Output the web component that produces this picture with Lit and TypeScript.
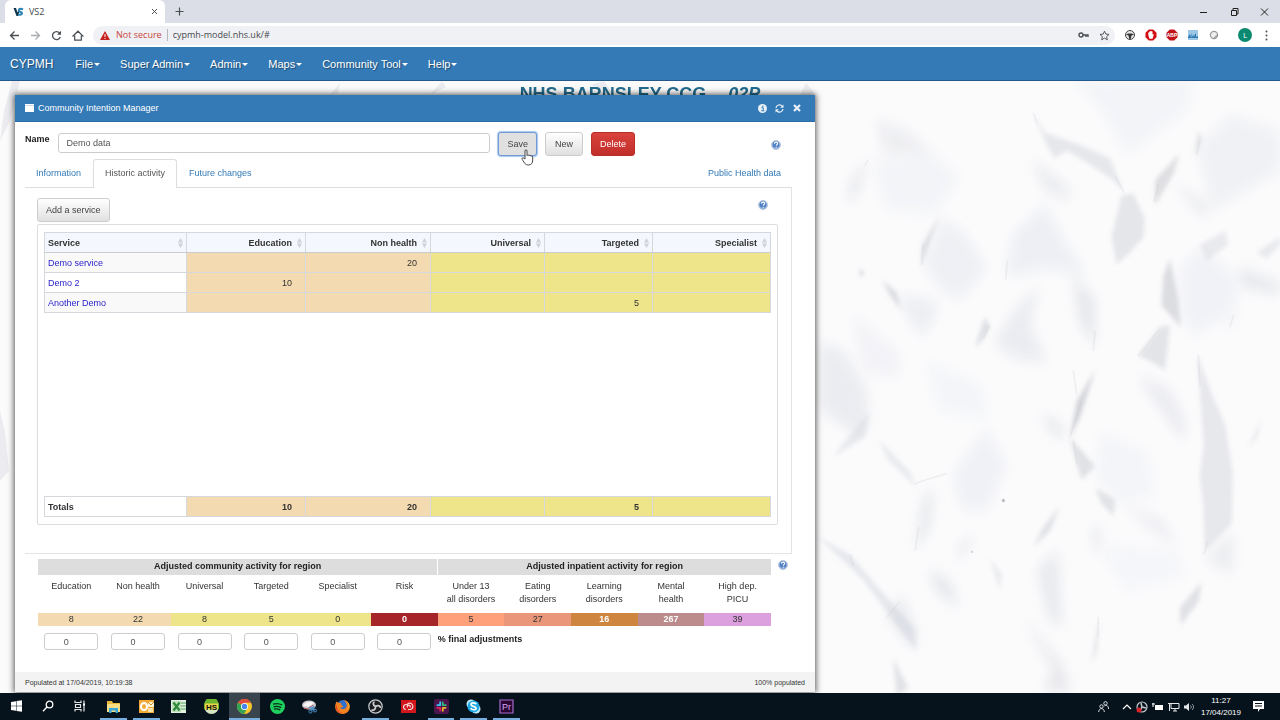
import { LitElement, html, css, svg } from "lit";
import { customElement } from "lit/decorators.js";
import { classMap } from "lit/directives/class-map.js";

const helpIcon = html`<svg class="help" viewBox="0 0 20 20" width="10" height="10" aria-hidden="true">
  <circle cx="10" cy="10" r="9" fill="#8fb0dc" stroke="#b9c6da" stroke-width="2"></circle>
  <circle cx="10" cy="9" r="6.5" fill="#4f7fc4"></circle>
  <path d="M6.8 7.4c.2-4.4 6.8-4 6.4-.2-.2 2-2.7 2-2.7 4.2M10.4 13.4v2" fill="none" stroke="#fff" stroke-width="2.2"></path>
</svg>`;

/* Crumpled-paper shading: [path, fill, opacity]. Creases keep a crisper edge than washes. */
const creases: [string, string, number][] = [
  ["M700 85L735 135L840 165L930 200L970 285L940 255L860 210L800 180L765 200L740 165Z", "#c9cbd2", 0.4],
  ["M965 295L1000 290L1035 355L1030 400L990 440L950 470L935 400Z", "#c6c8cf", 0.42],
  ["M1065 255L1138 188L1120 240L1065 320Z", "#b9bbc2", 0.42],
  ["M1185 195L1195 130L1205 150Z", "#b5b7be", 0.4],
  ["M420 345L385 420L365 472L368 420Z", "#b9bbc4", 0.5],
  ["M1110 455L1135 560L1142 630L1085 575L1090 500Z", "#b5b7be", 0.45],
  ["M1200 420L1275 385L1285 420L1220 460Z", "#c9cbd2", 0.35],
  ["M1015 703L1080 630L1110 625L1095 740L1060 720Z", "#c6c8cf", 0.45],
  ["M1192 700L1235 800L1275 880L1298 1000L1295 1130L1215 1200L1210 1080L1200 1010L1212 930Z", "#caccd4", 0.42],
  ["M885 740L840 860L810 912L830 820Z", "#aeb0b8", 0.5],
  ["M810 912L850 950L885 985L845 1020L828 970Z", "#bcbec6", 0.42],
  ["M885 1040L945 1070L940 1112L905 1080Z", "#bcbec6", 0.4],
  ["M245 510L290 540L303 585L270 550Z", "#b9bbc4", 0.45],
  ["M180 480L190 490L183 505Z", "#8f9199", 0.5],
  ["M555 605L570 630L545 665L525 682Z", "#b9bbc4", 0.45],
  ["M205 850L195 910L100 960L150 905Z", "#cccfd8", 0.4],
  ["M235 915L330 1000L350 1040L265 970Z", "#cfd1d9", 0.4],
  ["M55 1165L150 1210L230 1290L345 1400L348 1455L190 1275Z", "#c9ccd6", 0.4],
  ["M780 1085L750 1150L700 1190L730 1140Z", "#c2c4cc", 0.45],
  ["M280 1475L325 1550L290 1568Z", "#c3c5cd", 0.45],
  ["M1140 1345L1205 1280L1195 1330L1142 1390Z", "#bfc1c9", 0.45],
  ["M897 1370L890 1450L875 1490Z", "#bbbdc5", 0.5],
  ["M570 1220L605 1260L600 1300Z", "#c7c9d1", 0.35],
  ["M1388 860L1370 910L1345 940Z", "#b9bbc3", 0.4],
  ["M1370 440L1440 400L1440 420L1400 455Z", "#c7c9d1", 0.35],
];
const washes: [string, string, number][] = [
  ["M370 470L430 350L500 400L560 480L480 560L420 530Z", "#e3e6ee", 0.5],
  ["M620 500L640 390L735 320L800 420L860 500L740 480Z", "#e2e5ec", 0.55],
  ["M1140 480L1200 430L1310 500L1300 590L1180 650L1150 600Z", "#e8eaf1", 0.5],
  ["M300 545L420 570L370 655L320 600Z", "#dee1e9", 0.5],
  ["M580 670L650 580L718 528L690 620L740 720L650 710Z", "#dee0e8", 0.55],
  ["M820 500L885 560L885 680L840 620Z", "#d2d4dc", 0.5],
  ["M60 670L130 690L200 790L205 880L170 905L60 840Z", "#dbdee6", 0.5],
  ["M260 1370L305 1310L350 1410L345 1455Z", "#dadce4", 0.5],
  ["M385 1250L450 1280L475 1345L410 1300Z", "#ced1d9", 0.55],
  ["M710 1245L775 1200L785 1400L745 1370Z", "#d8dae2", 0.5],
  ["M665 1370L780 1480L815 1560L730 1560L760 1500Z", "#d3d5dc", 0.5],
  ["M1320 480L1440 520L1440 545L1325 525Z", "#d0d2db", 0.5],
  ["M225 100L320 130L400 190L255 190Z", "#dfe1e8", 0.5],
  ["M200 200L180 280L140 320L150 260Z", "#d6d8df", 0.5],
  ["M220 210L400 190L480 250L400 340L260 330Z", "#eff0f5", 0.6],
  ["M690 200L800 270L815 305L740 285Z", "#d9dbe2", 0.5],
  ["M820 0L1180 0L1160 80L980 190L900 70Z", "#eff0f5", 0.6],
  ["M1190 170L1290 90L1440 130L1440 230L1240 330Z", "#e7e9ef", 0.55],
  ["M1120 260L1240 330L1200 340Z", "#d2d4dc", 0.5],
  ["M460 1000L560 890L620 980L560 1100L480 1090Z", "#e7eaf1", 0.55],
  ["M345 1200L370 1070L400 1035L390 1140Z", "#d2d5dc", 0.5],
  ["M530 1160L470 1230L480 1180Z", "#d8dae3", 0.5],
  ["M720 850L780 880L800 910L760 900Z", "#c8cbd4", 0.5],
  ["M1010 750L1110 790L1160 880L1150 920L1090 850Z", "#dddfe7", 0.55],
  ["M970 1090L1080 1120L1140 1190L1050 1140Z", "#dddfe7", 0.55],
  ["M900 900L1040 950L1065 1060L960 1080L890 1010Z", "#f1f2f7", 0.7],
  ["M880 1130L905 1160L885 1220Z", "#d0d2da", 0.5],
  ["M900 1190L1120 1200L1160 1260L980 1300Z", "#f2f3f8", 0.7],
  ["M160 600L300 700L290 760L190 740Z", "#ecedf4", 0.6],
  ["M380 720L540 780L560 860L420 840Z", "#f0f2f7", 0.7],
  ["M1330 560L1300 620L1270 650Z", "#d8dae2", 0.5],
  ["M1210 1220L1300 1150L1300 1260Z", "#e2e4ea", 0.6],
];

@customElement("paper-backdrop")
export class PaperBackdrop extends LitElement {
  static styles = css`
    :host { display: block; background: #fbfbfc; }
    svg { display: block; width: 100%; height: 100%; }
  `;
  render() {
    return html`<svg viewBox="0 0 1280 612" preserveAspectRatio="xMaxYMin slice" aria-hidden="true">
      <defs>
        <filter id="wash" x="-20%" y="-20%" width="140%" height="140%"><feGaussianBlur stdDeviation="18"></feGaussianBlur></filter>
        <filter id="crease" x="-20%" y="-20%" width="140%" height="140%"><feGaussianBlur stdDeviation="6"></feGaussianBlur></filter>
      </defs>
      <g transform="translate(800 -1) scale(.3333 .3922)">
        <g filter="url(#wash)">${washes.map(([d, f, o]) => svg`<path d=${d} fill=${f} opacity=${o}></path>`)}</g>
        <g filter="url(#crease)">${creases.map(([d, f, o]) => svg`<path d=${d} fill=${f} opacity=${o}></path>`)}</g>
        <g fill="none" stroke="#bfc1c8" stroke-width="2" opacity=".5">
          <path d="M365 472L370 420M700 85L712 112M945 245L972 286M1063 310L1075 265M810 910L845 820M820 920L832 980M617 510L622 460M880 690L885 640M345 1030L360 1024L440 1003M550 660L568 625M1195 700L1200 780M345 1200L356 1140M895 1370L893 1420M1212 1210L1222 1180M150 1210L160 1240M260 1370L300 1330M1015 703L1078 635M1290 630L1300 600M195 220L204 203M1190 190L1200 155M820 740L830 800"></path>
        </g>
        <circle cx="610" cy="1072" r="4" fill="#a9abb2"></circle>
        <circle cx="516" cy="1203" r="2.5" fill="#b5b7be"></circle>
      </g>
      <g fill="#e2e3e8" opacity=".6">
        <path d="M12 0L20 0L10 40L0 60L4 30Z"></path><path d="M0 330L5 350L9 390L0 400Z"></path>
        <path d="M330 14L340 2L338 12Z"></path><path d="M430 14L442 0L446 6Z"></path>
        <path d="M590 4L604 0L612 12Z"></path><path d="M800 14L806 2L816 14Z"></path>
      </g>
    </svg>`;
  }
}

@customElement("browser-chrome")
export class BrowserChrome extends LitElement {
  static styles = css`
    :host { display: block; font: 9px/12px "Open Sans", sans-serif; color: #45494d; }
    button { border: 0; padding: 0; margin: 0; background: none; display: grid; place-items: center; }
    svg { display: block; }
    .strip { display: flex; align-items: center; height: 23px; background: #dbdee6; padding-left: 5px; }
    .tab { display: flex; align-items: center; gap: 5px; align-self: flex-end; width: 160px; height: 23px; box-sizing: border-box; padding: 0 7px 0 8px; background: #fff; border-radius: 6px 6px 0 0; }
    .tab span { flex: 1; }
    .add { margin-left: 10px; }
    .wins { margin-left: auto; display: flex; gap: 18px; padding-right: 10px; }
    .bar { display: flex; align-items: center; height: 24px; background: #fff; padding: 0 9px; }
    .nav { display: flex; gap: 10px; margin-right: 9px; }
    .omni { flex: 1; display: flex; align-items: center; height: 19px; border-radius: 10px; background: #f0f1f4; padding: 0 5px 0 7px; }
    .warn { color: #c8453c; margin: 0 5px 0 6px; }
    .sep { width: 1px; height: 12px; background: #b5b8bc; }
    input { flex: 1; border: 0; padding: 0 5px; background: none; font: inherit; color: inherit; outline: 0; }
    .omni button + button { margin-left: 10px; }
    .ext { display: flex; align-items: center; gap: 9px; margin-left: 9px; }
    .me { width: 14px; height: 14px; border-radius: 50%; background: #0b8a72; color: #fff; margin-left: 9px; font: 8px/14px "Open Sans", sans-serif; }
    .ext .more { width: 10px; height: 12px; }
  `;
  render() {
    const s = "#4b4f54";
    return html`
      <div class="strip">
        <div class="tab">
          <svg width="11" height="10" viewBox="0 0 22 20"><path d="M1 2h5l3 9 3-9h3l-5 16H7z" fill="#123449"></path><path d="M20 5c-8-4-11 3-5 5s2 7-5 5" fill="none" stroke="#2b86b8" stroke-width="4"></path></svg>
          <span>VS2</span>
          <button aria-label="Close tab"><svg width="7" height="7" viewBox="0 0 7 7"><path d="M1 1l5 5M6 1l-5 5" stroke=${s}></path></svg></button>
        </div>
        <button class="add" aria-label="New tab"><svg width="9" height="9" viewBox="0 0 9 9"><path d="M4.500 0.500v8M.5 4.500h8" stroke=${s} stroke-width="1.200"></path></svg></button>
        <div class="wins">
          <button aria-label="Minimise"><svg width="12" height="10" viewBox="0 0 12 10"><path d="M2 5.500h7" stroke="#222"></path></svg></button>
          <button aria-label="Restore"><svg width="12" height="10" viewBox="0 0 12 10"><path d="M3.500 3.500h5v5h-5zM5 3V1.500h5V7H9" fill="none" stroke="#222"></path></svg></button>
          <button aria-label="Close"><svg width="12" height="10" viewBox="0 0 12 10"><path d="M3 1.500l7 7M10 1.500l-7 7" stroke="#222"></path></svg></button>
        </div>
      </div>
      <div class="bar">
        <div class="nav">
          <button aria-label="Back"><svg width="11" height="11" viewBox="0 0 11 11"><path d="M10 5.500H1.500M5.500 1.500l-4 4 4 4" fill="none" stroke=${s} stroke-width="1.300"></path></svg></button>
          <button aria-label="Forward"><svg width="11" height="11" viewBox="0 0 11 11"><path d="M1 5.500h8.500M5.500 1.500l4 4-4 4" fill="none" stroke="#a9acb0" stroke-width="1.300"></path></svg></button>
          <button aria-label="Reload"><svg width="11" height="11" viewBox="0 0 11 11"><path d="M9.300 7A4 4 0 1 1 8.600 3" fill="none" stroke=${s} stroke-width="1.300"></path><path d="M10 .8v4H6z" fill=${s}></path></svg></button>
          <button aria-label="Home"><svg width="12" height="11" viewBox="0 0 12 11"><path d="M1 6l5-4.800L11 6H9.300v4.200H2.700V6z" fill="none" stroke=${s} stroke-width="1.200"></path></svg></button>
        </div>
        <div class="omni">
          <svg width="10" height="9" viewBox="0 0 10 9"><path d="M5 0l5 9H0z" fill="#c5221f"></path><path d="M5 3v3M5 7v1" stroke="#fff"></path></svg>
          <span class="warn">Not secure</span><span class="sep"></span>
          <input aria-label="Address" value="cypmh-model.nhs.uk/#">
          <button aria-label="Saved password"><svg width="11" height="8" viewBox="0 0 11 8"><circle cx="3" cy="4" r="2" fill="none" stroke=${s} stroke-width="1.400"></circle><path d="M5 4h5v2M8 4v2" fill="none" stroke=${s} stroke-width="1.400"></path></svg></button>
          <button aria-label="Bookmark"><svg width="11" height="11" viewBox="0 0 24 24"><path d="M12 2.500l2.900 6.500 7 .7-5.300 4.700 1.600 7-6.200-3.700-6.200 3.700 1.600-7L2.100 9.700l7-.7z" fill="none" stroke=${s} stroke-width="2"></path></svg></button>
        </div>
        <div class="ext">
          <button aria-label="Steering"><svg width="12" height="12" viewBox="0 0 12 12"><circle cx="6" cy="6" r="4.500" fill="#e4e4e4" stroke="#444" stroke-width="1"></circle><path d="M2 5.400c2-1.300 6-1.300 8 0L7.500 6.500 6.700 10H5.300l-.8-3.500z" fill="#333"></path></svg></button>
          <button aria-label="Ad blocker"><svg width="12" height="12" viewBox="0 0 12 12"><path d="M3.800.5h4.400l3.300 3.300v4.400l-3.300 3.300H3.800L.5 8.200V3.800z" fill="#d40d12"></path><path d="M3.300 6V3.500h1V2.600h1v-.6h1.200v.6h1v3l1-.8v1.700L7.500 9.700H4.500z" fill="#fff"></path></svg></button>
          <button aria-label="ABP"><svg width="12" height="12" viewBox="0 0 12 12"><path d="M3.800.5h4.400l3.300 3.300v4.400l-3.300 3.300H3.800L.5 8.200V3.800z" fill="#c1121a"></path><text x="6" y="8" font-size="5" font-weight="bold" fill="#fff" text-anchor="middle" font-family="Liberation Sans">ABP</text></svg></button>
          <button aria-label="Image tool"><svg width="12" height="12" viewBox="0 0 12 12"><path d="M1 1h10v10H1z" fill="#9cc8e6"></path><path d="M1 8l2-3v3l1.500-4v5l2-4v3l2.500-4v4l2-1v2H1z" fill="#2f7ab0"></path></svg></button>
          <button aria-label="Ring"><svg width="12" height="12" viewBox="0 0 12 12"><circle cx="6" cy="6" r="3.600" fill="#eee" stroke="#999" stroke-width="1.200"></circle><path d="M6 8.500A2.500 2.500 0 0 0 8.500 6" stroke="#888" fill="none"></path></svg></button>
          <button class="me" aria-label="Profile">L</button>
          <button class="more" aria-label="Menu"><svg width="3" height="11" viewBox="0 0 3 11" fill=${s}><circle cx="1.500" cy="1.500" r="1"></circle><circle cx="1.500" cy="5.500" r="1"></circle><circle cx="1.500" cy="9.500" r="1"></circle></svg></button>
        </div>
      </div>`;
  }
}

const columns = [
  { name: "Service", w: 142, cls: "svc" }, { name: "Education", w: 119, cls: "tan" }, { name: "Non health", w: 125, cls: "tan" },
  { name: "Universal", w: 114, cls: "khaki" }, { name: "Targeted", w: 108, cls: "khaki" }, { name: "Specialist", w: 118, cls: "khaki" },
];
const rows = [
  ["Demo service", "", "20", "", "", ""],
  ["Demo 2", "10", "", "", "", ""],
  ["Another Demo", "", "", "", "5", ""],
];
const totals = ["Totals", "10", "20", "", "5", ""];
const region = [
  ["Education", "8", "tan"], ["Non health", "22", "tan"], ["Universal", "8", "khaki"], ["Targeted", "5", "khaki"],
  ["Specialist", "0", "khaki"], ["Risk", "0", "risk"], ["Under 13\nall disorders", "5", "salmon"], ["Eating\ndisorders", "27", "dark-salmon"],
  ["Learning\ndisorders", "16", "peru"], ["Mental\nhealth", "267", "rosy"], ["High dep.\nPICU", "39", "plum"],
];

@customElement("intention-manager")
export class IntentionManager extends LitElement {
  static styles = css`
    :host { display: flex; flex-direction: column; background: #fff; color: #333; font: 9px/12px "Liberation Sans", Arial, sans-serif; box-shadow: 0 0 6px 1px rgba(0, 0, 0, .65); }
    svg { display: block; }
    header { display: flex; align-items: center; gap: 4px; height: 27px; box-sizing: border-box; padding: 0 12px 0 10px; background: #337ab7; border-bottom: 1px solid #2a6ca6; color: #fff; }
    header h2 { flex: 1; margin: 0; font: inherit; }
    header button { border: 0; background: none; padding: 0; width: 13px; display: grid; place-items: center; }
    .body { flex: 1; padding: 10px 10px 0; }
    .form { display: flex; align-items: flex-start; gap: 8px; }
    .form label { font-weight: bold; color: #222; line-height: 15px; }
    .form input { flex: 1; min-width: 0; height: 20px; margin-top: 1px; box-sizing: border-box; border: 1px solid #ccc; border-radius: 3px; padding: 0 8px; font: inherit; color: #555; }
    .btn { height: 24px; padding: 0 8px; border: 1px solid #ccc; border-radius: 3px; background: linear-gradient(#fff, #e0e0e0); color: #444; font: inherit; }
    .new { padding: 0 9px; }
    .save { background: #e0e0e0; border-color: #6f9bd8; box-shadow: 0 0 1px 1px #a9c6ee; }
    .delete { background: linear-gradient(#d9423d, #c12e2a); border-color: #b92c28; color: #fff; }
    .aside { width: 162px; padding: 8px 24px 0 0; box-sizing: border-box; display: flex; justify-content: flex-end; }
    .tabs { display: flex; gap: 1px; margin: 3px 13px 0 0; border-bottom: 1px solid #ddd; }
    .tabs a { padding: 0 10px; line-height: 26px; height: 28px; border: 1px solid transparent; border-bottom: 0; color: #337ab7; text-decoration: none; box-sizing: border-box; }
    .tabs .on { padding: 0 11px; color: #555; background: #fff; border-color: #ddd; border-radius: 3px 3px 0 0; height: 29px; margin-bottom: -1px; }
    .tabs .end { margin-left: auto; }
    .panel { margin-right: 13px; border: 1px solid #e4e4e4; border-width: 0 1px 1px 0; padding: 10px 13px 28px 12px; }
    .tools { display: flex; justify-content: space-between; padding: 0 10px 2px 0; }
    .tools .help { margin-top: 2px; }
    .box { border: 1px solid #ddd; border-radius: 2px; padding: 7px 6px; }
    table { border-collapse: collapse; table-layout: fixed; width: 100%; }
    .grid { min-height: 264px; }
    .data th, .data td { border: 1px solid #d5d8dc; height: 20px; box-sizing: border-box; padding: 0 13px 0 3px; text-align: right; color: #333; }
    .data thead th { background: #f4f7fd; border-bottom-color: #c9ccd0; }
    .data .first { text-align: left; }
    .data tbody tr:nth-child(odd) .first { background: #f9f9f9; }
    .data a { color: #2a22c8; text-decoration: none; }
    .data .sum { font-weight: bold; }
    .head { display: flex; justify-content: flex-end; align-items: center; gap: 5px; margin-right: -10px; }
    .first .head { justify-content: space-between; }
    .tan { background: #f3dab1; }
    .khaki { background: #eee58a; }
    .risk { background: #a52529; }
    .salmon { background: #ffa07a; }
    .dark-salmon { background: #e9967a; }
    .peru { background: #cd853f; }
    .rosy { background: #bc8b8b; }
    .plum { background: #dba0dd; }
    .region .risk, .region .peru, .region .rosy { color: #fff; font-weight: bold; }
    .region { display: flex; align-items: flex-start; gap: 7px; margin: 5px 17px 0 13px; }
    .sums { flex: 1; }
    .region table { text-align: center; }
    .region th, .region td { padding: 0; }
    .region .group th { background: #ddd; height: 16px; color: #222; line-height: 14px; vertical-align: top; }
    .region .group th + th { border-left: 1px solid #fff; }
    .region .names th { font-weight: normal; height: 38px; padding-top: 5px; box-sizing: border-box; line-height: 13px; vertical-align: top; white-space: pre-line; }
    .region .vals td { height: 13px; line-height: 13px; }
    .region .adj td { padding-top: 7px; vertical-align: top; }
    .adj input { width: 54px; height: 17px; box-sizing: border-box; border: 1px solid #ccc; border-radius: 3px; padding: 0 10px 0 0; text-align: center; font: inherit; color: #555; display: block; margin: 0 auto; }
    .region .adj .note { text-align: left; font-weight: bold; color: #222; }
    .region .help { margin-top: 1px; }
    footer { display: flex; justify-content: space-between; align-items: center; height: 20px; padding: 2px 10px 0; box-sizing: border-box; background: #f3f3f3; font-size: 7px; color: #333; }
  `;
  render() {
    const sort = html`<svg width="5" height="10" viewBox="0 0 5 10" fill="#cfd2d8" aria-hidden="true"><path d="M2.500 0L5 4.500H0zM0 5.500h5L2.500 10z"></path></svg>`;
    const cols = html`<colgroup>${columns.map((c) => html`<col style="width:${(c.w / 726) * 100}%">`)}</colgroup>`;
    return html`
      <header>
        <svg width="9" height="8" viewBox="0 0 9 8"><path d="M0 0h9v8H0z" fill="#fff"></path><path d="M0 1.500h9" stroke="#9fc0e0" stroke-width=".6"></path></svg>
        <h2>Community Intention Manager</h2>
        <button aria-label="Info"><svg width="9" height="9" viewBox="0 0 18 18"><circle cx="9" cy="9" r="9" fill="#e9eff6"></circle><path d="M7 7.500h3.500V13M6.500 13.500h6M8 4.500h3" fill="none" stroke="#337ab7" stroke-width="2"></path></svg></button>
        <button aria-label="Refresh"><svg width="9" height="9" viewBox="0 0 18 18"><path d="M2 8a7 7 0 0 1 12.500-3.500M16 10A7 7 0 0 1 3.500 13.500" fill="none" stroke="#e9eff6" stroke-width="2.500"></path><path d="M17 1v6.500h-6.500zM1 17v-6.500h6.500z" fill="#e9eff6"></path></svg></button>
        <button aria-label="Close"><svg width="8" height="8" viewBox="0 0 8 8"><path d="M1 1l6 6M7 1L1 7" stroke="#e9eff6" stroke-width="2.200"></path></svg></button>
      </header>
      <div class="body">
        <div class="form">
          <label for="name">Name</label><input id="name" value="Demo data">
          <button class="btn save">Save</button><button class="btn new">New</button><button class="btn delete">Delete</button>
          <span class="aside">${helpIcon}</span>
        </div>
        <nav class="tabs">
          <a href="#">Information</a><a href="#" class="on">Historic activity</a><a href="#">Future changes</a><a href="#" class="end">Public Health data</a>
        </nav>
        <section class="panel">
          <div class="tools"><button class="btn">Add a service</button>${helpIcon}</div>
          <div class="box">
            <div class="grid"><table class="data">${cols}
              <thead><tr>${columns.map((c, i) => html`<th class=${classMap({ first: i === 0 })}><span class="head">${c.name}${sort}</span></th>`)}</tr></thead>
              <tbody>${rows.map((r) => html`<tr>${r.map((v, i) => i === 0 ? html`<td class="first"><a href="#">${v}</a></td>` : html`<td class=${columns[i].cls}>${v}</td>`)}</tr>`)}</tbody>
            </table></div>
            <table class="data">${cols}<tfoot><tr>${totals.map((v, i) => html`<td class="sum ${i === 0 ? "first" : columns[i].cls}">${v}</td>`)}</tr></tfoot></table>
          </div>
        </section>
        <div class="region">
          <div class="sums"><table>
            <colgroup>${region.map(() => html`<col>`)}</colgroup>
            <thead>
              <tr class="group"><th colspan="6">Adjusted community activity for region</th><th colspan="5">Adjusted inpatient activity for region</th></tr>
              <tr class="names">${region.map(([n]) => html`<th>${n}</th>`)}</tr>
            </thead>
            <tbody>
              <tr class="vals">${region.map(([, v, c]) => html`<td class=${c}>${v}</td>`)}</tr>
              <tr class="adj">${region.slice(0, 6).map(([n]) => html`<td><input aria-label="${n} adjustment" value="0"></td>`)}<td class="note" colspan="5">% final adjustments</td></tr>
            </tbody>
          </table></div>
          ${helpIcon}
        </div>
      </div>
      <footer><span>Populated at 17/04/2019, 10:19:38</span><span>100% populated</span></footer>`;
  }
}

const apps = [
  { n: "File Explorer", run: true, g: svg`<path d="M1 2h5l1 2h7v9H1z" fill="#e9b93c"></path><path d="M1 5h13v8H1z" fill="#f8dd84"></path><path d="M3 14V9h9v5h-2.500v-2.500h-4V14z" fill="#35a5d8"></path>` },
  { n: "Outlook", run: true, g: svg`<path d="M0 1h15v13H0z" fill="#f4a935"></path><path d="M9 3h6v5H9z" fill="#fff3d8"></path><path d="M9 9h5v4H9z" fill="#fce3ae"></path><ellipse cx="5" cy="7.500" rx="3" ry="3.500" fill="none" stroke="#fff" stroke-width="2"></ellipse><path d="M9 3l3 3 3-3" fill="none" stroke="#d58a1c"></path>` },
  { n: "Excel", run: false, g: svg`<path d="M0 1h15v13H0z" fill="#e3f1e2"></path><path d="M1 2h9v11H1z" fill="#bfe0bd"></path><path d="M2.500 3.500l6 8M8.500 3.500l-6 8" stroke="#2f8a3b" stroke-width="2.200"></path><path d="M10 4h5M10 7h5M10 10h5" stroke="#57a35c"></path>` },
  { n: "HeidiSQL", run: false, g: svg`<circle cx="7.500" cy="7.500" r="7.500" fill="#d7e7c0"></circle><path d="M0 6a7.500 7.500 0 0 1 15 0v4H0z" fill="#6cb52d"></path><path d="M1 4.500h13v6H1z" fill="#e9d44a"></path><text x="7.500" y="10.500" font-size="8" font-weight="bold" text-anchor="middle" fill="#111" font-family="Liberation Sans">HS</text>` },
  { n: "Chrome", run: true, on: true, g: svg`<circle cx="7.500" cy="7.500" r="7.500" fill="#f9c52d"></circle><path d="M7.500 7.500L1 3.700A7.500 7.500 0 0 1 14 3.800H7.500z" fill="#dd4b3c"></path><path d="M7.500 7.500L1 3.700A7.500 7.500 0 0 0 7 15l3.500-6z" fill="#33a355"></path><circle cx="7.500" cy="7.500" r="3.500" fill="#fff"></circle><circle cx="7.500" cy="7.500" r="2.700" fill="#4684ee"></circle>` },
  { n: "Spotify", run: false, g: svg`<circle cx="7.500" cy="7.500" r="7.500" fill="#1ed15f"></circle><path d="M3 5.200c3-1 6.500-.7 9.200.8M3.500 7.800c2.500-.7 5.300-.4 7.700.8M4 10.200c2-.6 4.300-.3 6.200.7" fill="none" stroke="#0b2b17" stroke-width="1.300"></path>` },
  { n: "Snipping Tool", run: false, g: svg`<ellipse cx="7" cy="6" rx="7" ry="4.500" fill="#cfc6cc"></ellipse><path d="M1 7c2-5 8-5 11-3L7 8z" fill="#f7f4f5"></path><path d="M2 9c3 1.500 6 0 9-3" fill="none" stroke="#b5535a"></path><path d="M7 8l6 3M12 7l-3 5" stroke="#4f8fc4" stroke-width="1.500"></path><circle cx="8.500" cy="12.500" r="1.600" fill="none" stroke="#4f8fc4"></circle><circle cx="13" cy="11.500" r="1.500" fill="none" stroke="#4f8fc4"></circle>` },
  { n: "Firefox", run: false, g: svg`<circle cx="8" cy="7" r="6" fill="#2f6fd0"></circle><path d="M1.500 2.500C-3 12 5 16 9 14.700c5-1 7-6 5-10C12 1.500 10 1 8.500 1c3 2 3.500 4.500 3 6.500-1 3.500-5.500 3-6.500 1 2 .5 2.500-.5 3.500-1.500-2 0-3-2-2.500-3-2-.5-3.500 0-4.500-1.500z" fill="#f58220"></path><path d="M2 5c-1 5 2 9 7 9-6 1-10-4-7-9z" fill="#e5402b"></path><path d="M11 2c3 2 3.500 6 1.500 9 3-3 2.500-7-1.500-9z" fill="#ffd43b"></path>` },
  { n: "OBS", run: true, g: svg`<circle cx="7.500" cy="7.500" r="6.700" fill="#1b1c20" stroke="#c9cacc" stroke-width="1.200"></circle><path d="M7.500 7.500C4.500 6 5 3.500 6.500 2.700M7.500 7.500c3-2 5-.2 5 1.500M7.500 7.500c.3 3.500-2.300 4.200-4 3.200" fill="none" stroke="#c9cacc" stroke-width="1.800"></path>` },
  { n: "Creative Cloud", run: false, g: svg`<path d="M0 1h15v13H0z" fill="#d1161c"></path><path d="M5 10.500a2.500 2.500 0 1 1 1-4.800 3.200 3.200 0 1 1 3.500 4.800H7M6.500 8.500a1.500 1.500 0 1 1 2.500 0" fill="none" stroke="#f6dcdc" stroke-width="1.200"></path>` },
  { n: "Slack", run: true, g: svg`<rect width="15" height="15" rx="2" fill="#4a154b"></rect><g fill="none" stroke-width="1.800" stroke-linecap="round"><path d="M6.200 3.200v3M3.400 6.200h2.800" stroke="#36c5f0"></path><path d="M8.800 3.400v2.800M8.800 6.200h3" stroke="#2eb67d"></path><path d="M8.800 8.800v3M8.800 8.800h2.800" stroke="#ecb22e"></path><path d="M3.200 8.800h3M6.200 8.800v2.800" stroke="#e01e5a"></path></g>` },
  { n: "Skype", run: true, g: svg`<circle cx="5" cy="5" r="4.500" fill="#bfe9fa"></circle><circle cx="10" cy="10" r="4.500" fill="#bfe9fa"></circle><circle cx="7.500" cy="7.500" r="6" fill="#1fa9e4"></circle><path d="M10.300 5.200c-1.300-2-5.300-1.500-5.200.4.100 2.200 5 1.300 5 3.700 0 2-4.300 2-5.300-.3" fill="none" stroke="#fff" stroke-width="1.700"></path>` },
  { n: "Premiere Pro", run: true, g: svg`<path d="M1 1h13v13H1z" fill="#2a0634" stroke="#a76bc9" stroke-width="1.200"></path><text x="7.500" y="10.500" font-size="9" text-anchor="middle" fill="#dca6f4" font-family="Liberation Sans">Pr</text>` },
];

@customElement("task-bar")
export class TaskBar extends LitElement {
  static styles = css`
    :host { display: flex; align-items: stretch; height: 27px; background: #06121c; color: #fff; font: 8px/12px "Liberation Sans", Arial, sans-serif; }
    button { border: 0; background: none; padding: 0; display: grid; place-items: center; box-sizing: border-box; border-bottom: 2px solid transparent; }
    svg { display: block; }
    .sys { display: grid; grid-template-columns: repeat(3, 32px); }
    .apps { display: grid; grid-template-columns: repeat(13, 1fr); width: 426px; margin-left: 1px; }
    .apps button { margin: 0 3px 0 3px; padding-top: 1px; }
    .apps .run { border-bottom-color: #76aee0; }
    .apps .on { background: #3a444d; margin: 0 1px; }
    .tray { margin-left: auto; display: flex; align-items: center; gap: 4px; padding-right: 16px; }
    .people { margin-right: 9px; }
    .clock { text-align: center; margin: 0 8px 0 2px; }
    .clock div { line-height: 12px; }
  `;
  render() {
    return html`
      <div class="sys">
        <button aria-label="Start"><svg width="11" height="12" viewBox="0 0 11 12" fill="#fff"><path d="M0 2l5-.8v4.500H0zM5.500 1.100L11 .3v5.400H5.500zM0 6.300h5v4.500L0 10zM5.500 6.300H11v5.400l-5.500-.8z"></path></svg></button>
        <button aria-label="Search"><svg width="12" height="12" viewBox="0 0 12 12"><circle cx="7.500" cy="4.500" r="3.300" fill="none" stroke="#fff" stroke-width="1.300"></circle><path d="M5 7L1 11.200" stroke="#fff" stroke-width="1.300"></path></svg></button>
        <button aria-label="Task view"><svg width="12" height="12" viewBox="0 0 12 12"><path d="M1 .5v2h6v-2M1.500 4.500h5v3h-5zM1 11.500v-2h6v2M10 .5v11" fill="none" stroke="#e4e6e8" stroke-width="1.200"></path><path d="M9 3.500h2v2H9z" fill="#fff"></path></svg></button>
      </div>
      <div class="apps">${apps.map((a) => html`<button aria-label=${a.n} class=${classMap({ run: a.run, on: !!a.on })}><svg width="15" height="15" viewBox="0 0 15 15">${a.g}</svg></button>`)}</div>
      <div class="tray">
        <svg class="people" width="11" height="12" viewBox="0 0 11 12" fill="none" stroke="#dde0e3"><circle cx="3.500" cy="5.500" r="1.700"></circle><path d="M.7 11c0-4.500 5.600-4.500 5.600 0"></path><circle cx="7.500" cy="2.300" r="1.700"></circle><path d="M6.500 5c2-1.500 4-.2 4 3"></path></svg>
        <svg width="10" height="8" viewBox="0 0 10 8"><path d="M1 6l4-4 4 4" fill="none" stroke="#fff" stroke-width="1.200"></path></svg>
        <svg width="12" height="12" viewBox="0 0 12 12"><circle cx="6" cy="6" r="5" fill="none" stroke="#c9cacc" stroke-width="1.200"></circle><path d="M6 6L5 2M6 6l4 1M6 6l-2 4" stroke="#c9cacc" stroke-width="1.500"></path><circle cx="3" cy="9" r="2.500" fill="#d8232a"></circle></svg>
        <svg width="12" height="10" viewBox="0 0 12 10"><path d="M3 3h8v5H3z" fill="#fff"></path><path d="M0 2h3M1 1v4" stroke="#fff"></path></svg>
        <svg width="12" height="10" viewBox="0 0 12 10" fill="none" stroke="#e4e6e8"><path d="M3 1.500h8v5H3zM5 9h4M7 7v2M1.500 1v8M0 1.500h3"></path></svg>
        <svg width="11" height="10" viewBox="0 0 11 10"><path d="M0 3.500h2L5 1v8L2 6.500H0z" fill="#e4e6e8"></path><path d="M6.500 3.500c1 1 1 2 0 3M8 2c2 2 2 4 0 6" fill="none" stroke="#a5abb0"></path></svg>
        <div class="clock"><div>11:27</div><div>17/04/2019</div></div>
        <svg width="11" height="11" viewBox="0 0 11 11"><path d="M0 0h11v8H7L5 11V8H0z" fill="#fff"></path><path d="M2 2.500h7M2 5h7" stroke="#06121c"></path></svg>
      </div>`;
  }
}

@customElement("app-root")
export class AppRoot extends LitElement {
  static styles = css`
    :host { display: flex; flex-direction: column; height: 100vh; overflow: hidden; font: 11px/14px "Liberation Sans", Arial, sans-serif; }
    .menu { display: flex; align-items: center; gap: 20px; height: 34px; box-sizing: border-box; padding-left: 10px; background: #337ab7; border-bottom: 1px solid #22598a; color: #fff; text-shadow: 1px 1px 1px rgba(0, 0, 0, .4); }
    .menu a { color: inherit; text-decoration: none; }
    .menu .brand { font-size: 12px; margin-right: 2px; }
    .caret::after { content: ""; display: inline-block; vertical-align: middle; margin-left: 1px; border: 3px solid transparent; border-top-color: #fff; border-bottom: 0; }
    main { position: relative; flex: 1; min-height: 0; overflow: hidden; }
    paper-backdrop { position: absolute; inset: 0; }
    h1 { position: relative; display: flex; justify-content: center; gap: 22px; margin: 0; padding-top: 3px; font: bold 18px/20px "Liberation Sans", Arial, sans-serif; color: #226b8c; }
    intention-manager { position: absolute; left: 15px; top: 14px; bottom: 1px; width: 800px; }
    .pointer { position: absolute; left: 521px; top: 68px; }
  `;
  render() {
    return html`
      <browser-chrome></browser-chrome>
      <nav class="menu">
        <a class="brand" href="#">CYPMH</a>
        ${["File", "Super Admin", "Admin", "Maps", "Community Tool", "Help"].map((m) => html`<a class="caret" href="#">${m}</a>`)}
      </nav>
      <main>
        <paper-backdrop></paper-backdrop>
        <h1><span>NHS BARNSLEY CCG</span><em>02P</em></h1>
        <intention-manager></intention-manager>
        <svg class="pointer" width="13" height="17" viewBox="0 0 13 17" aria-hidden="true"><path d="M4 10V2c0-1.600 2-1.600 2 0v4.500c.3-.9 1.900-.7 2 .3.400-.8 1.800-.5 1.900.4.500-.7 1.800-.3 1.800.8v3c0 3-1.400 5-4.200 5-3 0-3.700-1.400-6.300-5.600-.8-1.300.6-2.200 1.500-1.200z" fill="#fff" stroke="#333" stroke-width=".9"></path></svg>
      </main>
      <task-bar></task-bar>`;
  }
}
